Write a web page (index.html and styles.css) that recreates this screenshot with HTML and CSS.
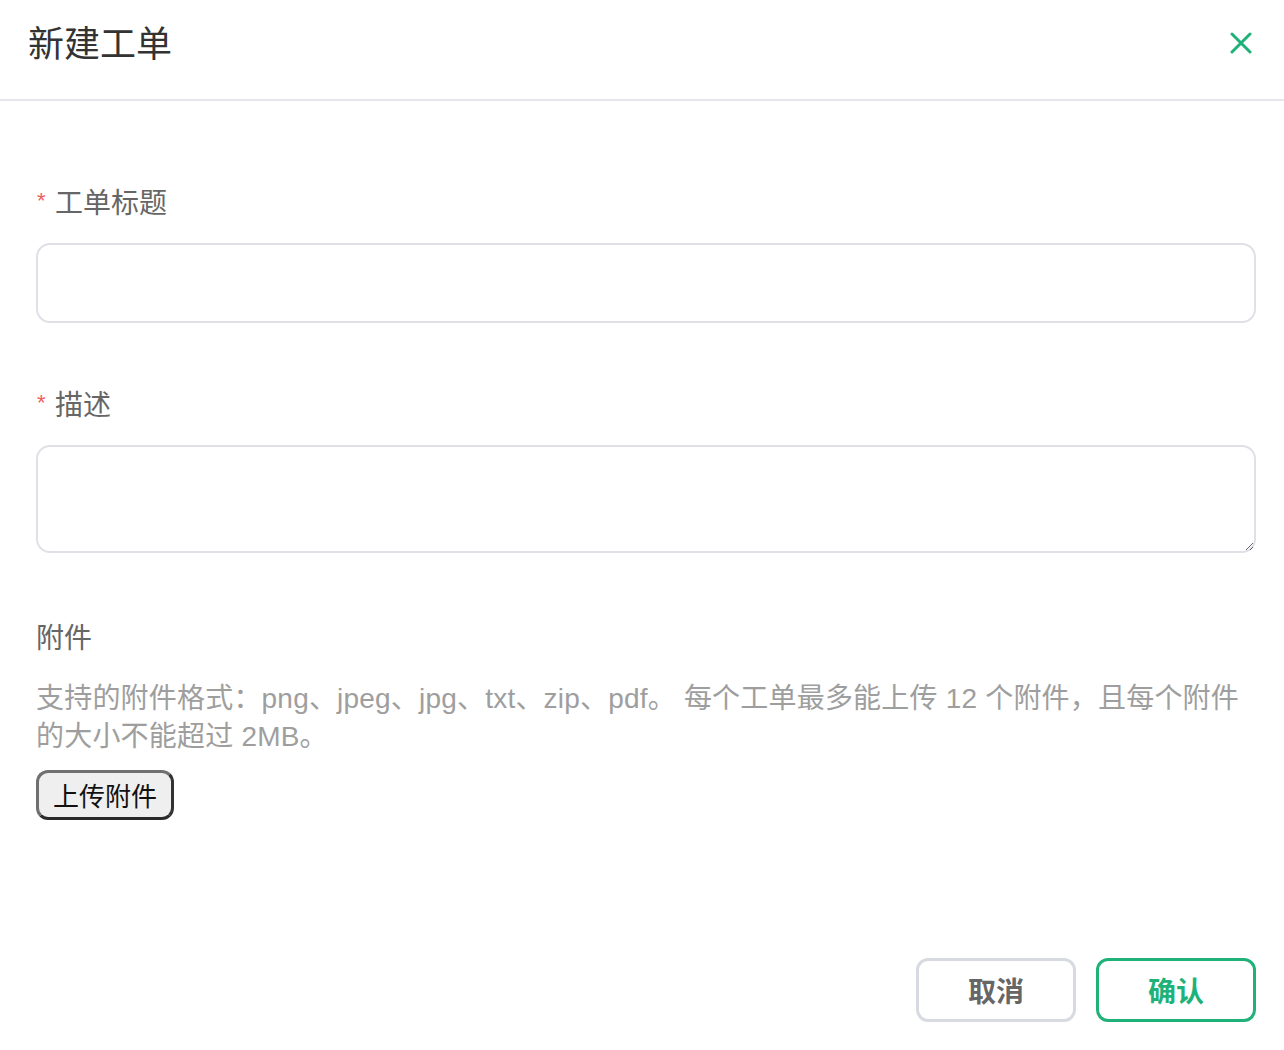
FILE: index.html
```html
<!DOCTYPE html>
<html lang="zh-CN">
<head>
<meta charset="utf-8">
<title>新建工单</title>
<link rel="stylesheet" href="styles.css">
</head>
<body>
<div class="page">
  <header class="header">
    <h1 class="title">新建工单</h1>
    <button class="close" aria-label="关闭">
      <svg width="22" height="22" viewBox="0 0 22 22"><path d="M2 2 L20 20 M20 2 L2 20" stroke="#1fb278" stroke-width="3" stroke-linecap="round" fill="none"/></svg>
    </button>
  </header>
  <main class="form">
    <div class="field">
      <label class="label"><span class="req">*</span>工单标题</label>
      <input class="input" type="text">
    </div>
    <div class="field">
      <label class="label"><span class="req">*</span>描述</label>
      <textarea class="textarea"></textarea>
    </div>
    <div class="field attach">
      <label class="label plain">附件</label>
      <p class="hint">支持的附件格式：png、jpeg、jpg、txt、zip、pdf。 每个工单最多能上传 12 个附件，且每个附件的大小不能超过 2MB。</p>
      <button class="upload">上传附件</button>
    </div>
  </main>
  <footer class="footer">
    <button class="btn cancel">取消</button>
    <button class="btn confirm">确认</button>
  </footer>
</div>
</body>
</html>
```

FILE: styles.css
```css
* { box-sizing: border-box; }
html, body { margin: 0; padding: 0; background: #fff; }
body {
  font-family: "Liberation Sans", "Noto Sans CJK SC", sans-serif;
}
.page {
  min-height: 1050px;
  display: flex;
  flex-direction: column;
}
.header {
  height: 101px;
  border-bottom: 2px solid #e6e7ee;
  display: flex;
  align-items: center;
  justify-content: space-between;
  padding: 0 32px 10px 28px;
}
.title {
  margin: 0;
  font-size: 36px;
  font-weight: 400;
  color: #333;
  line-height: 44px;
}
.close {
  border: 0;
  background: none;
  padding: 0;
  width: 22px;
  height: 22px;
  display: flex;
  margin-bottom: 4px;
}
.form {
  flex: 1;
  padding: 83px 28px 0 36px;
  display: flex;
  flex-direction: column;
}
.field { display: flex; flex-direction: column; }
.field + .field { margin-top: 63px; }
.label {
  font-size: 28px;
  line-height: 40px;
  color: #666;
  margin-bottom: 19px;
  display: flex;
  align-items: center;
}
.req {
  color: #f25c5c;
  font-size: 22px;
  width: 18px;
  margin-left: 1px;
  margin-top: -6px;
}
.input {
  height: 80px;
  border: 2px solid #dfe1e7;
  border-radius: 14px;
  outline: none;
  font-size: 28px;
}
.textarea {
  height: 108px;
  border: 2px solid #dfe1e7;
  border-radius: 14px;
  outline: none;
  font-size: 28px;
  resize: both;
  font-family: inherit;
}
.attach { margin-top: 66px !important; }
.plain { margin-bottom: 21px; }
.hint {
  margin: 0;
  font-size: 28px;
  line-height: 38px;
  color: #9e9e9e;
  padding-right: 10px;
  letter-spacing: 0.2px;
}
.upload {
  align-self: flex-start;
  margin-top: 14px;
  height: 50px;
  padding: 0 14px;
  font-size: 26px;
  font-family: "Noto Sans CJK SC", sans-serif;
  color: #111;
  background: #efefef;
  border: 3px solid #555;
  border-color: #707070 #333 #2a2a2a #707070;
  border-radius: 12px;
  line-height: 1;
}
.footer {
  display: flex;
  justify-content: flex-end;
  gap: 20px;
  padding: 0 28px 28px 0;
}
.btn {
  width: 160px;
  height: 64px;
  border-radius: 12px;
  background: #fff;
  font-size: 28px;
  font-weight: 700;
  font-family: "Noto Sans CJK SC", sans-serif;
}
.cancel { border: 3px solid #d8dae1; color: #666; }
.confirm { border: 3px solid #1fb278; color: #1fb278; }
```
